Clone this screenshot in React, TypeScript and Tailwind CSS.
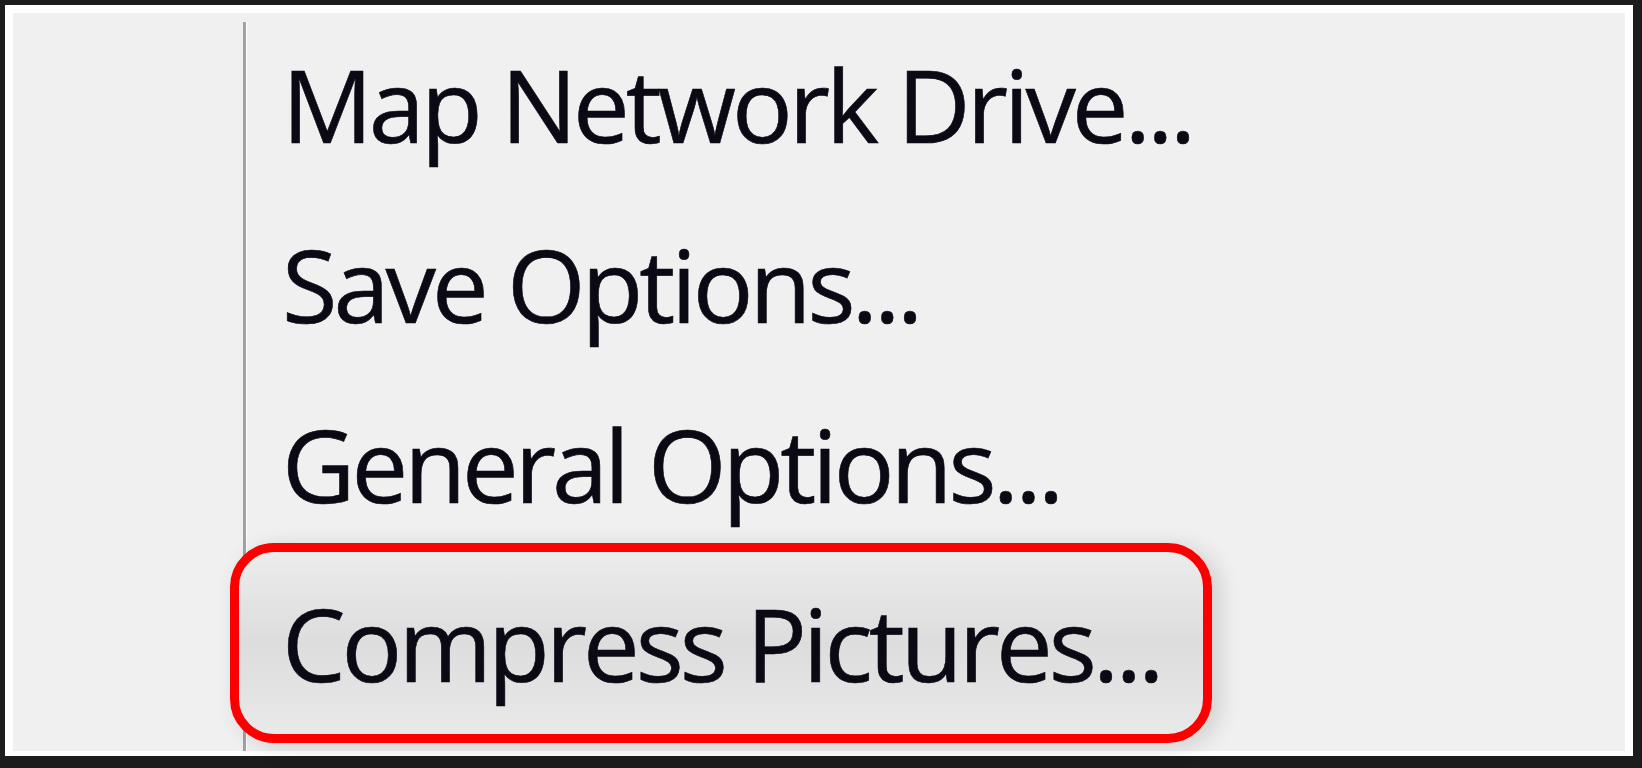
const items = ["Map Network Drive...", "Save Options...", "General Options..."];

function MenuRow({ label }: { label: string }) {
  return (
    <div className="h-[180px] whitespace-nowrap pl-[35px] text-[101px] leading-[180px] tracking-[-4px] text-[#0b0a14] [-webkit-text-stroke:0.6px_#0b0a14]">
      {label}
    </div>
  );
}

export default function App() {
  return (
    <div
      className="h-[768px] w-[1642px] overflow-hidden bg-[#1c1c1c] pb-[12px] pl-[5px] pr-[9px] pt-[5px]"
      style={{ fontFamily: '"Open Sans", "Noto Sans", sans-serif' }}
    >
      <div className="flex h-full border-[8px] border-b-[5px] border-white bg-[#f0f0f0]">
        <div className="flex w-[234px] shrink-0 justify-end">
          <div className="mt-[9px] w-[3px] bg-[#a2a2a2]" />
          <div className="mt-[9px] w-[1px] bg-white" />
        </div>
        <div className="flex flex-col pt-[1px]">
          {items.map((label) => (
            <MenuRow key={label} label={label} />
          ))}
          <div className="relative -ml-[17px] -mt-[11px] h-[200px] w-[982px] rounded-[44px] border-[9px] border-[#fb0000] bg-gradient-to-b from-[#ececec] via-[#dddddd] to-[#e9e9e9] pl-[43px] text-[101px] leading-[182px] tracking-[-4px] whitespace-nowrap text-[#0b0a14] shadow-[8px_4px_22px_rgba(0,0,0,0.14)] [-webkit-text-stroke:0.6px_#0b0a14]">
            Compress Pictures...
          </div>
        </div>
      </div>
    </div>
  );
}
